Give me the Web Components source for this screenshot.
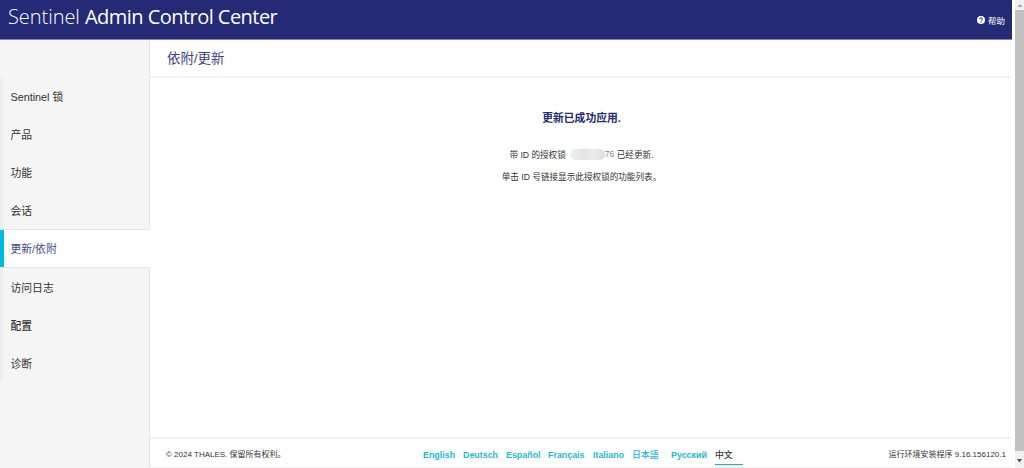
<!DOCTYPE html>
<html lang="zh-CN">
<head>
<meta charset="utf-8">
<title>Sentinel Admin Control Center</title>
<style>
body{
    margin: 0;
    height: 468px;
    overflow: hidden;
    background-color: #fff;
    color: #333;
    font-family: "Liberation Sans", "Noto Sans CJK SC", sans-serif;
}
</style>
</head>
<body>
<acc-app></acc-app>

<script>
class AccHeader extends HTMLElement{
    constructor(){
        super();
        this.shadowDOM=this.attachShadow({mode:"open"});
    }

    connectedCallback(){
        this.shadowDOM.innerHTML=`
        <style>
        :host{
            display: flex;
            justify-content: space-between;
            box-sizing: border-box;
            height: 40px;
            padding: 0 7px 0 8px;
            background-color: #242a75;
            border-bottom: 1px solid #8084b0;
            color: #fff;
        }

        h1{
            display: flex;
            margin: 0;
            font: 400 20px/34px "Open Sans", sans-serif;
            white-space: nowrap;
        }

        .brand{
            width: 77px;
            font-weight: 300;
            letter-spacing: -0.05px;
        }

        .product{
            letter-spacing: -0.54px;
        }

        .help{
            display: flex;
            align-items: center;
            gap: 3px;
            height: 40px;
            font-size: 8.5px;
        }
        </style>

        <h1><span class="brand">Sentinel</span><span class="product">Admin Control Center</span></h1>
        <div class="help">
            <svg width="8" height="8" viewBox="0 0 16 16">
                <circle cx="8" cy="8" r="8" fill="#fff"/>
                <path d="M5.2 6.2Q5.4 3.8 8.1 3.8T10.8 6.2Q10.8 7.3 9.4 8T8 9.8" fill="none" stroke="#242a75" stroke-width="2"/>
                <rect x="7" y="11" width="2.1" height="2" fill="#242a75"/>
            </svg>
            <span>帮助</span>
        </div>
        `
    }
}

class AccMenuItem extends HTMLElement{
    constructor(){
        super();
        this.shadowDOM=this.attachShadow({mode:"open"});
    }

    connectedCallback(){
        this.shadowDOM.innerHTML=`
        <style>
        :host{
            display: flex;
            align-items: center;
            box-sizing: border-box;
            height: 38px;
            padding-left: 7.5px;
            border-left: 3px solid #eee;
            border-right: 1px solid #e6e6e6;
            font-size: 10.8px;
            white-space: nowrap;
        }

        :host([selected]){
            height: 39px;
            padding: 0 0 1px 10.5px;
            background-color: #fff;
            border-left: none;
            border-right-color: #fff;
            border-top: 1px solid #e6e6e6;
            border-bottom: 1px solid #e6e6e6;
            box-shadow: inset 4px 0 #00bbdc;
            color: #44488c;
        }

        :host([strong]){
            font-weight: 500;
        }
        </style>

        <slot></slot>
        `
    }
}

class AccMenu extends HTMLElement{
    constructor(){
        super();
        this.shadowDOM=this.attachShadow({mode:"open"});
    }

    connectedCallback(){
        this.shadowDOM.innerHTML=`
        <style>
        :host{
            display: flex;
            flex-direction: column;
            width: 150px;
            background-color: #f5f5f5;
        }

        .space{
            height: 37px;
            border-right: 1px solid #e6e6e6;
        }

        .rest{
            flex-grow: 1;
            border-right: 1px solid #e6e6e6;
        }
        </style>

        <div class="space"></div>
        <slot></slot>
        <div class="rest"></div>
        `
    }
}

class AccMessage extends HTMLElement{
    constructor(){
        super();
        this.shadowDOM=this.attachShadow({mode:"open"});
    }

    connectedCallback(){
        this.shadowDOM.innerHTML=`
        <style>
        :host{
            display: flex;
            flex-direction: column;
            flex-grow: 1;
            align-items: center;
            padding: 31px 0 0 1px;
            font-size: 8.6px;
        }

        h3{
            margin: 0 0 16px;
            font-size: 10.8px;
            line-height: 18px;
            color: #242a75;
        }

        p{
            display: flex;
            align-items: center;
            margin: 0;
            height: 22px;
            white-space: pre;
        }

        .mask{
            width: 35px;
            height: 11px;
            margin-left: 4px;
            border-radius: 5px;
            background: linear-gradient(90deg, #f0f0f0, #e3e3e3 45%, #ececec 65%, #dfdfdf);
        }

        .id{
            color: #888;
        }
        </style>

        <h3>更新已成功应用.</h3>
        <p><span>带 ID 的授权锁</span><span class="mask"></span><span class="id">76</span><span> 已经更新.</span></p>
        <p>单击 ID 号链接显示此授权锁的功能列表。</p>
        `
    }
}

class AccFooter extends HTMLElement{
    constructor(){
        super();
        this.shadowDOM=this.attachShadow({mode:"open"});
    }

    connectedCallback(){
        this.shadowDOM.innerHTML=`
        <style>
        :host{
            display: grid;
            grid-template-columns: 257px 1fr auto;
            box-sizing: border-box;
            height: 31px;
            padding: 0 6px 0 16px;
            border-top: 2px solid #f2f2f2;
            border-bottom: 1px solid #f3f3f3;
            font-size: 8px;
            line-height: 32px;
            white-space: nowrap;
        }

        nav{
            display: flex;
            font-size: 8.9px;
            font-weight: bold;
            color: #1bb9d6;
        }

        nav span{
            box-sizing: border-box;
            height: 26px;
        }

        .cjk{
            font-weight: 500;
        }

        .current{
            width: 28px;
            color: #333;
            box-shadow: inset 0 -1px #00bbdc;
        }
        </style>

        <span>© 2024 THALES. 保留所有权利。</span>
        <nav>
            <span style="width:40px">English</span>
            <span style="width:43px">Deutsch</span>
            <span style="width:42px">Español</span>
            <span style="width:45px">Français</span>
            <span style="width:39px">Italiano</span>
            <span class="cjk" style="width:39px">日本語</span>
            <span style="width:44px">Русский</span>
            <span class="cjk current">中文</span>
        </nav>
        <span>运行环境安装程序 9.16.156120.1</span>
        `
    }
}

class AccScrollbar extends HTMLElement{
    constructor(){
        super();
        this.shadowDOM=this.attachShadow({mode:"open"});
    }

    connectedCallback(){
        this.shadowDOM.innerHTML=`
        <style>
        :host{
            display: flex;
            flex-direction: column;
            width: 9px;
            margin-left: 3px;
            background-color: #f1f1f1;
        }

        .thumb{
            flex-grow: 1;
            background-color: #c1c1c1;
        }

        svg{
            display: block;
        }
        </style>

        <svg width="9" height="10" viewBox="0 0 9 10"><path d="M2.5 7h5L5 4z" fill="#a3a3a3"/></svg>
        <div class="thumb"></div>
        <svg width="9" height="17" viewBox="0 0 9 17"><path d="M2 8h5L4.500 11.500z" fill="#505050"/></svg>
        `
    }
}

class AccApp extends HTMLElement{
    constructor(){
        super();
        this.shadowDOM=this.attachShadow({mode:"open"});
    }

    connectedCallback(){
        this.shadowDOM.innerHTML=`
        <style>
        :host{
            display: grid;
            grid-template-columns: 1012px 12px;
            height: 468px;
        }

        .page{
            display: flex;
            flex-direction: column;
        }

        .body{
            display: flex;
            flex-grow: 1;
        }

        main{
            display: flex;
            flex-direction: column;
            flex-grow: 1;
        }

        h2{
            box-sizing: border-box;
            height: 38px;
            margin: 0;
            padding-left: 17px;
            border-bottom: 2px solid #f2f2f2;
            font-size: 13.4px;
            font-weight: normal;
            line-height: 37px;
            color: #3c4186;
        }
        </style>

        <div class="page">
            <acc-header></acc-header>
            <div class="body">
                <acc-menu>
                    <acc-menu-item>Sentinel 锁</acc-menu-item>
                    <acc-menu-item>产品</acc-menu-item>
                    <acc-menu-item>功能</acc-menu-item>
                    <acc-menu-item>会话</acc-menu-item>
                    <acc-menu-item selected>更新/依附</acc-menu-item>
                    <acc-menu-item>访问日志</acc-menu-item>
                    <acc-menu-item strong>配置</acc-menu-item>
                    <acc-menu-item>诊断</acc-menu-item>
                </acc-menu>
                <main>
                    <h2>依附/更新</h2>
                    <acc-message></acc-message>
                    <acc-footer></acc-footer>
                </main>
            </div>
        </div>
        <acc-scrollbar></acc-scrollbar>
        `
    }
}

customElements.define("acc-header", AccHeader)
customElements.define("acc-menu-item", AccMenuItem)
customElements.define("acc-menu", AccMenu)
customElements.define("acc-message", AccMessage)
customElements.define("acc-footer", AccFooter)
customElements.define("acc-scrollbar", AccScrollbar)
customElements.define("acc-app", AccApp)
</script>
</body>
</html>
